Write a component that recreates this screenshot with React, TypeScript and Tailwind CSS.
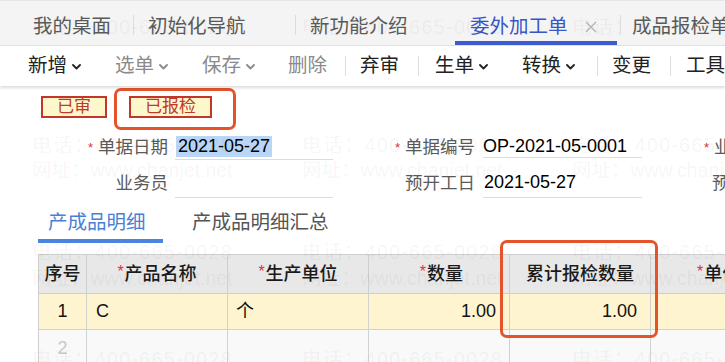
import React from "react";

const Chevron = () => (
  <svg width="9" height="6" viewBox="0 0 9 6" className="ml-[5px] mt-[2px] shrink-0">
    <path d="M1 1 L4.5 4.5 L8 1" fill="none" stroke="currentColor" strokeWidth="1.8" strokeLinecap="round" strokeLinejoin="round" />
  </svg>
);

const Sep = ({ cls }: { cls: string }) => <div className={"shrink-0 w-px h-[20px] bg-[#dedede] " + cls} />;

const Star = () => <span className="text-[#e0303a] text-[13px] mr-[5px] relative top-[-1px] font-normal">*</span>;
const HStar = () => <span className="text-[#e0303a] text-[16px] mr-[1px] relative top-[-2px] font-normal">*</span>;

function Watermark() {
  const cols = [32, 302, 572];
  const phoneRows = [27, 145, 252, 359];
  const webRows = [62, 170, 278];
  const items: React.ReactNode[] = [];
  phoneRows.forEach((y, i) =>
    cols.forEach((x, j) =>
      items.push(
        <div key={"p" + i + j} className="absolute whitespace-nowrap tracking-[1.4px]" style={{ left: x, top: y - 12 }}>
          电话：400-665-0028
        </div>
      )
    )
  );
  webRows.forEach((y, i) =>
    cols.forEach((x, j) =>
      items.push(
        <div key={"w" + i + j} className="absolute whitespace-nowrap" style={{ left: x, top: y - 12 }}>
          网址：www.chanjet.net
        </div>
      )
    )
  );
  return (
    <div className="absolute inset-0 pointer-events-none text-[19.5px] leading-[24px] text-[rgba(0,0,0,0.055)]">
      {items}
    </div>
  );
}

export default function App() {
  return (
    <div className="relative w-[725px] h-[362px] overflow-hidden bg-white font-['Liberation_Sans','Noto_Sans_CJK_SC',sans-serif]">
      {/* Top tab bar */}
      <div className="flex h-[46px] bg-[#f4f4f4] border-t border-[#e6e6e6] border-b border-b-[#e2e2e2] text-[19.5px] text-[#5a5a5a] whitespace-nowrap">
        <div className="shrink-0 w-[133px] h-[44px] pl-[33px] pt-[11px] flex items-center border-b-4 border-transparent">我的桌面</div>
        <div className="shrink-0 mt-[14px] w-px h-[20px] bg-[#dcdcdc]" />
        <div className="shrink-0 w-[161px] h-[44px] pl-[14px] pt-[11px] flex items-center border-b-4 border-transparent">初始化导航</div>
        <div className="shrink-0 mt-[14px] w-px h-[20px] bg-[#dcdcdc]" />
        <div className="shrink-0 w-[159px] h-[44px] pl-[14px] pt-[11px] flex items-center border-b-4 border-transparent">新功能介绍</div>
        <div className="shrink-0 w-[162px] h-[44px] pl-[15px] pt-[11px] flex items-center border-b-4 border-[#3d5bcf] text-[#3a55c6]">
          委外加工单
          <svg width="14" height="14" viewBox="0 0 14 14" className="ml-[16px]">
            <path d="M2 2 L12 12 M12 2 L2 12" stroke="#b5b5b5" strokeWidth="1.4" />
          </svg>
        </div>
        <div className="shrink-0 ml-[3px] mt-[14px] w-px h-[20px] bg-[#dcdcdc]" />
        <div className="shrink-0 h-[44px] pl-[11px] pt-[11px] flex items-center border-b-4 border-transparent">成品报检单</div>
      </div>

      {/* Toolbar */}
      <div className="relative z-10 flex items-center h-[40px] pl-[28px] bg-white text-[19.5px] text-[#222] whitespace-nowrap shadow-[0_2px_3px_rgba(0,0,0,0.14)]">
        <div className="shrink-0 w-[87px] flex items-center">新增<Chevron /></div>
        <div className="shrink-0 w-[87px] flex items-center text-[#8a8a8a]">选单<Chevron /></div>
        <div className="shrink-0 w-[86px] flex items-center text-[#8a8a8a]">保存<Chevron /></div>
        <div className="shrink-0 w-[57px] flex items-center text-[#8a8a8a]">删除</div>
        <Sep cls="mr-[14px]" />
        <div className="shrink-0 w-[58px] flex items-center">弃审</div>
        <Sep cls="mr-[16px]" />
        <div className="shrink-0 w-[87px] flex items-center">生单<Chevron /></div>
        <div className="shrink-0 w-[75px] flex items-center">转换<Chevron /></div>
        <Sep cls="mr-[14px]" />
        <div className="shrink-0 w-[58px] flex items-center">变更</div>
        <Sep cls="mr-[15px]" />
        <div className="shrink-0 flex items-center">工具</div>
      </div>

      {/* Content */}
      <div className="relative">
        {/* Badges */}
        <div className="flex pt-[10px] pl-[41px] h-[43px]">
          <div className="shrink-0 w-[66px] h-[22px] border-2 border-[#c4352a] bg-[#fdf8cc] text-[#c0392b] text-[17px] leading-[18px] flex items-center justify-center">已审</div>
          <div className="shrink-0 ml-[22px] w-[83px] h-[22px] border-2 border-[#c4352a] bg-[#fdf8cc] text-[#c0392b] text-[17px] leading-[18px] flex items-center justify-center">已报检</div>
        </div>

        {/* Form row 1 */}
        <div className="flex items-center h-[36px] text-[17.5px] whitespace-nowrap">
          <div className="shrink-0 w-[168px] text-right text-[#5a5a5a]"><Star />单据日期</div>
          <div className="shrink-0 ml-[7px] w-[158px] h-[26px] border-b border-[#dcdcdc] flex items-center">
            <span className="ml-[1px] px-[2px] bg-[#b9d6f6] text-[18px] text-black leading-[21px]">2021-05-27</span>
          </div>
          <div className="shrink-0 w-[142px] text-right text-[#5a5a5a]"><Star />单据编号</div>
          <div className="shrink-0 ml-[8px] w-[159px] h-[22px] border-b border-[#dcdcdc] flex items-center text-[18px] text-black">OP-2021-05-0001</div>
          <div className="shrink-0 pl-[62px] text-[#5a5a5a]"><Star />业务类型</div>
        </div>

        {/* Form row 2 */}
        <div className="flex items-center h-[36px] text-[17.5px] whitespace-nowrap">
          <div className="shrink-0 w-[168px] text-right text-[#5a5a5a]">业务员</div>
          <div className="shrink-0 ml-[7px] w-[158px] h-[30px] border-b border-[#dcdcdc]" />
          <div className="shrink-0 w-[142px] text-right text-[#5a5a5a]">预开工日</div>
          <div className="shrink-0 ml-[8px] w-[159px] h-[30px] border-b border-[#dcdcdc] flex items-center text-[18px] text-black pl-[1px]">2021-05-27</div>
          <div className="shrink-0 pl-[70px] text-[#5a5a5a]">预计完工</div>
        </div>

        {/* Sub tabs */}
        <div className="flex pl-[38px] text-[19.5px] whitespace-nowrap">
          <div className="shrink-0 w-[125px] h-[42px] pl-[10px] pt-[6px] flex items-center border-b-4 border-[#4a84de] text-[#4a7fd6]">产成品明细</div>
          <div className="shrink-0 ml-[29px] h-[42px] pt-[6px] flex items-center border-b-4 border-transparent text-[#555]">产成品明细汇总</div>
        </div>

        {/* Table */}
        <div className="mt-[11px] ml-[38px] border-l border-[#cfcfcf] text-[18px] whitespace-nowrap">
          <div className="grid grid-cols-[48px_141px_141px_141px_141px_141px] h-[40px] bg-[#e8e8e8] border-t border-[#cfcfcf] text-[#1a1a1a] font-medium">
            <div className="border-r border-b border-[#cfcfcf] flex items-center justify-center">序号</div>
            <div className="border-r border-b border-[#cfcfcf] flex items-center justify-center"><HStar />产品名称</div>
            <div className="border-r border-b border-[#cfcfcf] flex items-center justify-center"><HStar />生产单位</div>
            <div className="border-r border-b border-[#cfcfcf] flex items-center justify-end pr-[46px]"><HStar />数量</div>
            <div className="border-r border-b border-[#cfcfcf] flex items-center justify-center">累计报检数量</div>
            <div className="border-r border-b border-[#cfcfcf] flex items-center pl-[46px]"><HStar />单价</div>
          </div>
          <div className="grid grid-cols-[48px_141px_141px_141px_141px_141px] h-[36px] bg-[#fff4d0] text-[#111]">
            <div className="border-r border-b border-[#d2d2d2] flex items-center justify-center">1</div>
            <div className="border-r border-b border-[#d2d2d2] flex items-center pl-[9px]">C</div>
            <div className="border-r border-b border-[#d2d2d2] flex items-center pl-[8px]">个</div>
            <div className="border-r border-b border-[#d2d2d2] flex items-center justify-end pr-[13px]">1.00</div>
            <div className="border-r border-b border-[#d2d2d2] flex items-center justify-end pr-[13px]">1.00</div>
            <div className="border-r border-b border-[#d2d2d2]" />
          </div>
          <div className="grid grid-cols-[48px_141px_141px_141px_141px_141px] h-[36px] bg-[#f9f9f9] text-[#c8c8c8]">
            <div className="border-r border-[#d2d2d2] flex items-center justify-center">2</div>
            <div className="border-r border-[#d2d2d2]" />
            <div className="border-r border-[#d2d2d2]" />
            <div className="border-r border-[#d2d2d2]" />
            <div className="border-r border-[#d2d2d2]" />
            <div className="border-r border-[#d2d2d2]" />
          </div>
        </div>
      </div>

      <Watermark />

      {/* Highlight annotations */}
      <div className="absolute left-[114px] top-[88px] w-[122px] h-[42px] border-[3px] border-[#e5532b] rounded-[7px] pointer-events-none" />
      <div className="absolute left-[500px] top-[240px] w-[158px] h-[98px] border-[3px] border-[#e5532b] rounded-[7px] pointer-events-none" />
    </div>
  );
}
